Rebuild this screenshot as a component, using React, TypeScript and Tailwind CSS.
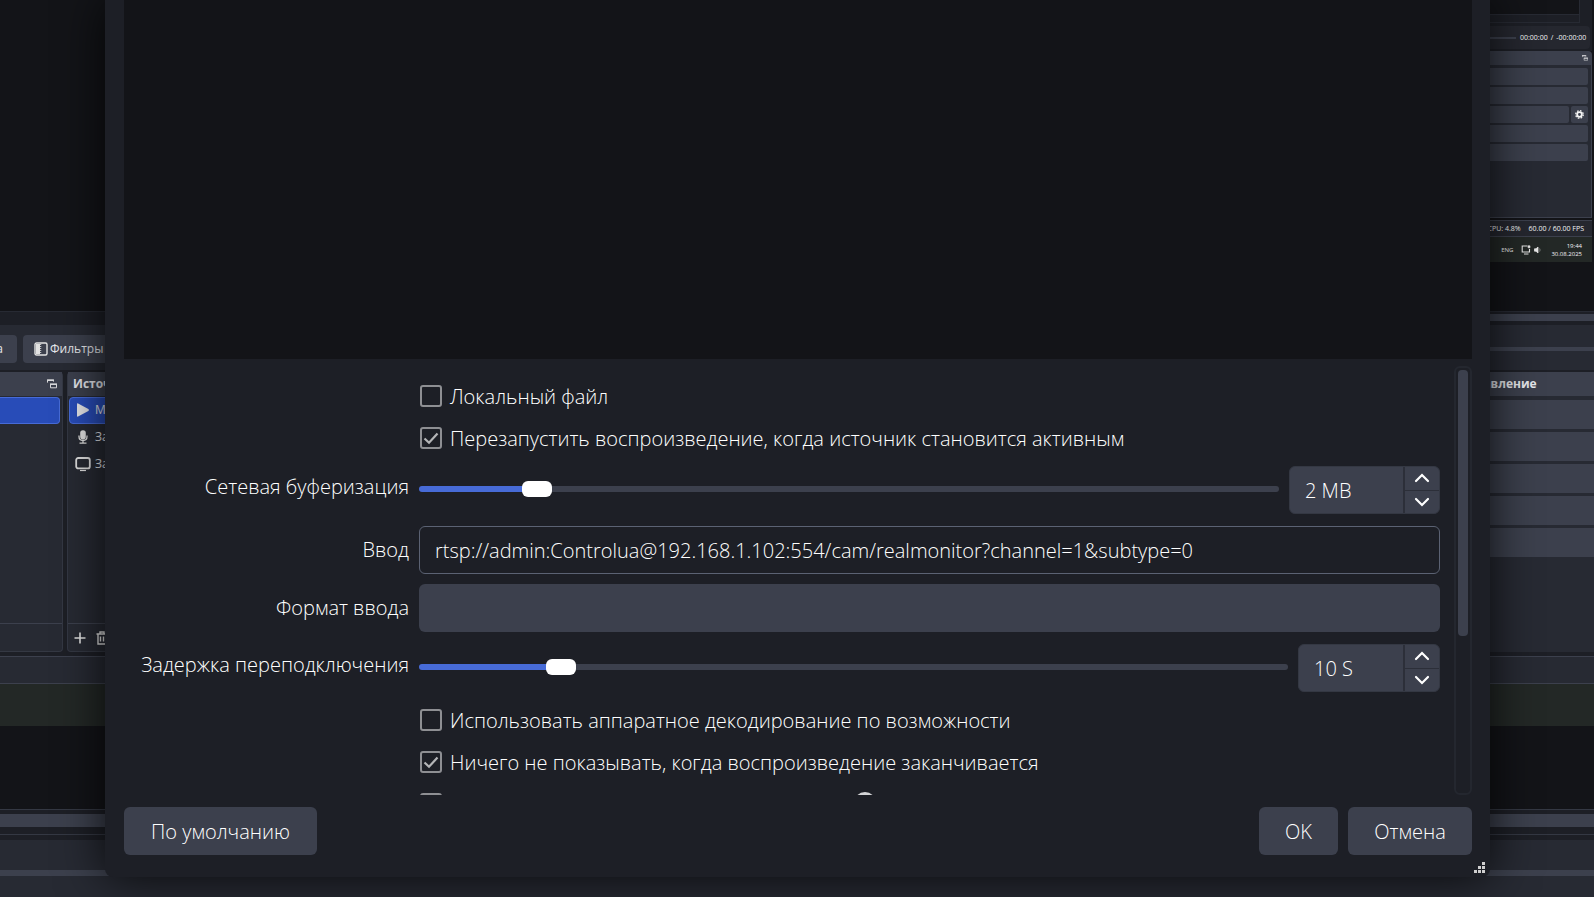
import { useState } from "react";
import type { ReactNode } from "react";

const controlButtons = [0, 1, 2, 3, 4];

function FloatIcon({ size = 10 }: { size?: number }) {
  return (
    <svg width={size} height={size} viewBox="0 0 10 10" fill="none" stroke="#d8d8da">
      <path d="M.5 3.6V1.2h6v1.4" strokeWidth="1" />
      <path d="M0 1.2h7" strokeWidth="1.6" />
      <path d="M3.5 5.4h6v3.4h-6Z" strokeWidth="1" />
      <path d="M3 5.2h7" strokeWidth="1.6" />
    </svg>
  );
}

const sources = [
  {
    name: "Медиа",
    icon: (
      <svg width="16" height="16" viewBox="0 0 16 16">
        <path d="M2 2.2v11.6q0 1.2 1.1.7l10.3-5.6q1.2-.9 0-1.8L3.1 1.5Q2 1 2 2.2Z" fill="#e6e6e8" />
      </svg>
    ),
  },
  {
    name: "Захват",
    icon: (
      <svg width="16" height="16" viewBox="0 0 16 16" fill="none">
        <rect x="5.2" y="1.2" width="5.6" height="9.4" rx="2.8" fill="#e0e0e0" />
        <path d="M4 6.5v1q0 4 4 4t4-4v-1M8 11.5V14M4.5 14.2h7" stroke="#e0e0e0" strokeWidth="1.3" />
      </svg>
    ),
  },
  {
    name: "Захват",
    icon: (
      <svg width="16" height="16" viewBox="0 0 16 16" fill="none" stroke="#e0e0e0">
        <rect x="1.2" y="2" width="13.6" height="10.4" rx="2" strokeWidth="1.8" />
        <path d="M5 14.5h6" strokeWidth="1.2" />
      </svg>
    ),
  },
];

/* Captured desktop, shown small inside the main preview */
function CapturedDesktop() {
  return (
    <div className="mr-0.5 w-40 text-[7px] leading-[8px] font-medium text-gray-100">
      <div className="bg-[#1d1f26]">
        <div className="mr-3 h-[15px] border-r border-b border-[#272a33] bg-[#131418]" />
        <div className="mr-3 h-2 border-r border-b border-[#272a33]" />
      </div>
      <div className="bg-[#1d1f26] pt-[3px] pb-0.5">
        <div className="mr-0.5 flex h-[23px] items-center justify-end gap-1 rounded-sm bg-[#25272f] pr-0.5">
          <div className="h-0.5 flex-1 bg-[#3c404d]" />
          <span className="flex w-[68px] gap-[3px] whitespace-nowrap">
            <span>00:00:00</span>
            <span>/</span>
            <span>-00:00:00</span>
          </span>
        </div>
      </div>
      <div className="flex h-3.5 items-center justify-end rounded-t-sm bg-[#3c404d] pr-1">
        <FloatIcon size={6} />
      </div>
      <div className="flex h-[153px] flex-col gap-0.5 border-r border-b border-[#3c404d] bg-[#272a33] py-[3px] pr-[3px]">
        {controlButtons.map((n) => (
          <div key={n} className="flex gap-0.5">
            <div className="h-[17px] flex-1 rounded-xs bg-[#3c404d]" />
            {n === 2 && (
              <div className="flex h-[17px] w-[17px] items-center justify-center rounded-xs bg-[#3c404d]">
                <svg width="9" height="9" viewBox="0 0 10 10" fill="none" stroke="#f4f4f4">
                  <circle cx="5" cy="5" r="2.6" strokeWidth="2" />
                  <circle cx="5" cy="5" r="4.2" strokeWidth="1.4" strokeDasharray="1.8 1.5" />
                </svg>
              </div>
            )}
          </div>
        ))}
      </div>
      <div className="mt-0.5 flex h-[17px] items-center justify-end gap-2 border-y border-[#3c404d] bg-[#25272f] pr-2 whitespace-nowrap">
        <span>CPU: 4.8%</span>
        <span>60.00 / 60.00 FPS</span>
      </div>
      <div className="flex h-[25px] items-center justify-end bg-[#232826] pr-2.5 text-[6px]">
        <span>ENG</span>
        <svg className="ml-2" width="22" height="10" viewBox="0 0 22 10" fill="none" stroke="#e6e6e6">
          <path d="M6.5 1H1.2v6h7.3V4M3 9h4.5" strokeWidth="1.1" />
          <path d="M7 .8h2v2H7Z" fill="#e6e6e6" strokeWidth=".6" />
          <path d="M13.5 3.8h1.5l2-1.8v6l-2-1.8h-1.5Z" fill="#e6e6e6" strokeWidth=".8" />
          <path d="M18.6 3.4q1 1.6 0 3.2" stroke="#8a8d8c" strokeWidth=".8" />
        </svg>
        <span className="ml-2 text-right">
          19:44
          <br />
          30.08.2025
        </span>
      </div>
    </div>
  );
}

function MainWindow() {
  return (
    <div className="flex min-h-screen flex-col bg-[#1d1f26] text-gray-200">
      <div className="flex h-[311px] justify-end overflow-hidden bg-[#131418]">
        <CapturedDesktop />
      </div>

      {/* Preview scrollbar strip */}
      <div className="flex h-[15px] items-start justify-end border-y border-[#272a33] pt-0.5">
        <div className="h-[7px] w-1/3 bg-[#3c404d]" />
      </div>

      {/* Source toolbar */}
      <div className="flex h-11 items-center justify-between bg-[#272a33] pt-0.5">
        <div className="flex gap-1.5 text-xs">
          <button className="flex h-7 w-[17px] items-center justify-end rounded-r-sm bg-[#3c404d] pr-3.5">а</button>
          <button className="flex h-7 w-28 items-center rounded-sm bg-[#3c404d] pl-[11px]">
            <svg width="14" height="14" viewBox="0 0 14 14" fill="none">
              <rect x="1" y="1" width="12" height="12" rx="1.5" stroke="#e2e2e2" strokeWidth="1.4" />
              <path d="M2 2h4v10H2Z" fill="#e2e2e2" />
              <path d="M6.7 2v10" stroke="#e2e2e2" strokeDasharray="1 1" />
            </svg>
            <span className="ml-0.5">Фильтры</span>
          </button>
        </div>
        <div className="h-1 w-1/3 bg-[#3c404d]" />
      </div>

      {/* Docks */}
      <div className="mt-0.5 flex h-[280px] gap-1">
        <section className="flex w-[63px] flex-col rounded-r-sm border-r border-b border-[#343843] bg-[#272a33]">
          <div className="flex h-6 items-center justify-end bg-[#3c404d] pr-[5px]">
            <FloatIcon />
          </div>
          <div className="mt-px mr-0.5 h-[27px] rounded-r-sm border border-l-0 border-[#476bd7] bg-[#284cb8]" />
          <div className="mt-auto h-7 border-t border-[#3c404d]" />
        </section>
        <section className="flex flex-1 flex-col rounded-sm border border-t-0 border-[#343843] bg-[#272a33] text-xs">
          <h2 className="h-6 bg-[#3c404d] pl-[5px] leading-6 font-bold text-gray-200">Источники</h2>
          <ul className="mt-px px-px">
            {sources.map((source, i) => (
              <li
                key={i}
                className={`flex h-[27px] items-center gap-1 rounded-sm border pb-px pl-[5px] ${i === 0 ? "border-[#476bd7] bg-[#284cb8]" : "border-transparent"}`}
              >
                {source.icon}
                <span>{source.name}</span>
              </li>
            ))}
          </ul>
          <div className="mt-auto flex h-7 items-center gap-2 border-t border-[#3c404d] pl-[5px]">
            <button aria-label="Добавить">
              <svg width="14" height="14" viewBox="0 0 14 14" fill="none" stroke="#e2e2e2">
                <path d="M7 1.5v11M1.5 7h11" strokeWidth="1.6" />
              </svg>
            </button>
            <button aria-label="Удалить">
              <svg width="14" height="14" viewBox="0 0 14 14" fill="none" stroke="#e2e2e2">
                <path d="M1.5 3h11M5 2.5V1h4v1.5M3 3.5V13h8V3.5M5.5 5.5v5M8.5 5.5v5" strokeWidth="1.4" />
              </svg>
            </button>
          </div>
        </section>
        <section className="flex w-[140px] flex-col bg-[#272a33]">
          <h2 className="h-6 bg-[#3c404d] pl-1.5 text-xs leading-6 font-bold text-gray-200">Управление</h2>
          <div className="flex flex-col gap-[3px] pt-1">
            {controlButtons.map((n) => (
              <div key={n} className="h-[29px] bg-[#3c404d]" />
            ))}
          </div>
        </section>
      </div>

      {/* Status bar and taskbar */}
      <div className="mt-1 h-7 border-y border-[#3c404d] bg-[#272a33]" />
      <div className="h-[42px] bg-[#232826]" />
      <div className="h-[83px] bg-[#131418]" />
      <div className="flex h-[31px] flex-col gap-1 border-t border-[#343843] pt-1">
        <div className="h-[13px] bg-[#3c404d]" />
        <div className="h-1 border-b border-[#343843]" />
      </div>
      <div className="h-[30px] bg-[#272a33]" />
      <div className="h-1.5 bg-[#3c404d]" />
      <div className="flex-1 bg-[#272a33]" />
    </div>
  );
}

function CheckRow({ id, label, checked = false }: { id: string; label: string; checked?: boolean }) {
  return (
    <div className="ml-[295px] flex h-8 shrink-0 items-center gap-2 pl-px">
      <span className="relative h-[22px] w-[22px]">
        <input
          id={id}
          type="checkbox"
          defaultChecked={checked}
          className="peer block h-[22px] w-[22px] appearance-none rounded-[3px] border-2 border-[#8e8f93]"
        />
        <svg
          className="pointer-events-none absolute inset-0 hidden peer-checked:block"
          width="22"
          height="22"
          viewBox="0 0 22 22"
          fill="none"
        >
          <path d="M4.5 11.5 9 15.8 17.5 6.5" stroke="#b4b5b7" strokeWidth="2.2" />
        </svg>
      </span>
      <label htmlFor={id} className="pt-0.5">{label}</label>
    </div>
  );
}

function FormRow({ id, label, raised = false, children }: { id: string; label: string; raised?: boolean; children: ReactNode }) {
  return (
    <div className="flex shrink-0 items-center gap-2.5">
      <label htmlFor={id} className={`w-[285px] shrink-0 text-right whitespace-nowrap ${raised ? "pb-1.5" : "pb-px"}`}>
        {label}
      </label>
      <div className="flex flex-1 items-center gap-2.5">{children}</div>
    </div>
  );
}

function Chevron({ up = false }: { up?: boolean }) {
  return (
    <svg width="16" height="10" viewBox="0 0 16 10" fill="none">
      <path d={up ? "M2 8 8 2l6 6" : "M2 2l6 6 6-6"} stroke="#fff" strokeWidth="2.2" strokeLinecap="round" />
    </svg>
  );
}

function SliderField({ id, label, initial, text, narrow = false }: { id: string; label: string; initial: number; text: string; narrow?: boolean }) {
  const [value, setValue] = useState(initial);
  const pct = value / 10;

  return (
    <FormRow id={id} label={label} raised>
      <input
        id={id}
        type="range"
        min={0}
        max={1000}
        value={value}
        onChange={(e) => setValue(Number(e.target.value))}
        className="mt-[22px] mb-6 h-1.5 min-w-0 flex-1 appearance-none rounded-full [&::-webkit-slider-thumb]:h-4 [&::-webkit-slider-thumb]:w-[30px] [&::-webkit-slider-thumb]:appearance-none [&::-webkit-slider-thumb]:rounded-md [&::-webkit-slider-thumb]:bg-white"
        style={{ background: `linear-gradient(to right, #476bd7 ${pct + 1}%, #3c404d ${pct + 1}%)` }}
      />
      <div className={`flex h-12 rounded-md border border-[#343843] bg-[#3c404d] ${narrow ? "w-[142px]" : "w-[151px]"}`}>
        <input aria-label={label} defaultValue={text} className="min-w-0 flex-1 bg-transparent pt-0.5 pl-[15px] outline-none" />
        <div className="flex w-9 flex-col border-l-2 border-[#2c2f39]">
          <button aria-label="Больше" className="flex flex-1 items-center justify-center border-b border-[#2c2f39]">
            <Chevron up />
          </button>
          <button aria-label="Меньше" className="flex flex-1 items-center justify-center">
            <Chevron />
          </button>
        </div>
      </div>
    </FormRow>
  );
}

function PropertiesDialog() {
  return (
    <div
      role="dialog"
      className="absolute top-0 right-[104px] bottom-5 left-[105px] flex flex-col rounded-b-lg bg-[#1d1f26] px-[18px] text-xl font-[330] text-white shadow-[0_0_48px_rgba(0,0,0,0.8)]"
    >
      <div className="ml-px flex-1 bg-[#131418]" />

      <div className="mt-[7px] ml-px flex h-[429px] overflow-hidden">
        <form className="flex flex-1 flex-col gap-2.5 pt-3.5">
          <CheckRow id="local" label="Локальный файл" />
          <CheckRow id="restart" label="Перезапустить воспроизведение, когда источник становится активным" checked />
          <SliderField id="buffer" label="Сетевая буферизация" initial={124} text="2 MB" />
          <FormRow id="input" label="Ввод">
            <input
              id="input"
              defaultValue="rtsp://admin:Controlua@192.168.1.102:554/cam/realmonitor?channel=1&subtype=0"
              className="h-12 flex-1 rounded-md border border-[#5b6273] bg-transparent px-[15px] outline-none"
            />
          </FormRow>
          <FormRow id="format" label="Формат ввода">
            <input id="format" className="h-12 flex-1 rounded-md bg-[#3c404d] px-[15px] outline-none" />
          </FormRow>
          <SliderField id="delay" label="Задержка переподключения" initial={151} text="10 S" narrow />
          <CheckRow id="hardware" label="Использовать аппаратное декодирование по возможности" />
          <CheckRow id="clear" label="Ничего не показывать, когда воспроизведение заканчивается" checked />
          <div className="ml-[295px] flex h-8 shrink-0 items-center pl-px">
            <input
              type="checkbox"
              aria-label="Закрывать файл"
              className="h-[22px] w-[22px] appearance-none rounded-[3px] border-2 border-[#8e8f93]"
            />
            <svg className="mb-0.5 ml-[412px]" width="22" height="22" viewBox="0 0 22 22">
              <circle cx="11" cy="11" r="11" fill="#d4d5d7" />
            </svg>
          </div>
        </form>
        <div className="ml-3.5 w-[18px] rounded-md border-2 border-[#24272f] p-0.5">
          <div className="h-[266px] rounded-sm bg-[#3c404d]" />
        </div>
      </div>

      <div className="mt-3 mb-[22px] ml-px flex gap-2.5">
        <button className="h-12 w-[193px] rounded-md bg-[#3c404d] pt-0.5">По умолчанию</button>
        <button className="ml-auto h-12 w-[79px] rounded-md bg-[#3c404d] pt-0.5">OK</button>
        <button className="h-12 w-[124px] rounded-md bg-[#3c404d] pt-0.5">Отмена</button>
      </div>

      <svg className="absolute right-1 bottom-[3px]" width="13" height="12" viewBox="0 0 13 12" fill="#cfcfcf">
        <path d="M9 0h3v3H9ZM5 4h3v3H5ZM9 4h3v3H9ZM1 8h3v3H1ZM5 8h3v3H5ZM9 8h3v3H9Z" />
      </svg>
    </div>
  );
}

export default function App() {
  return (
    <main className="relative min-h-screen overflow-hidden font-['Open_Sans','Noto_Sans',sans-serif]">
      <MainWindow />
      <PropertiesDialog />
    </main>
  );
}
